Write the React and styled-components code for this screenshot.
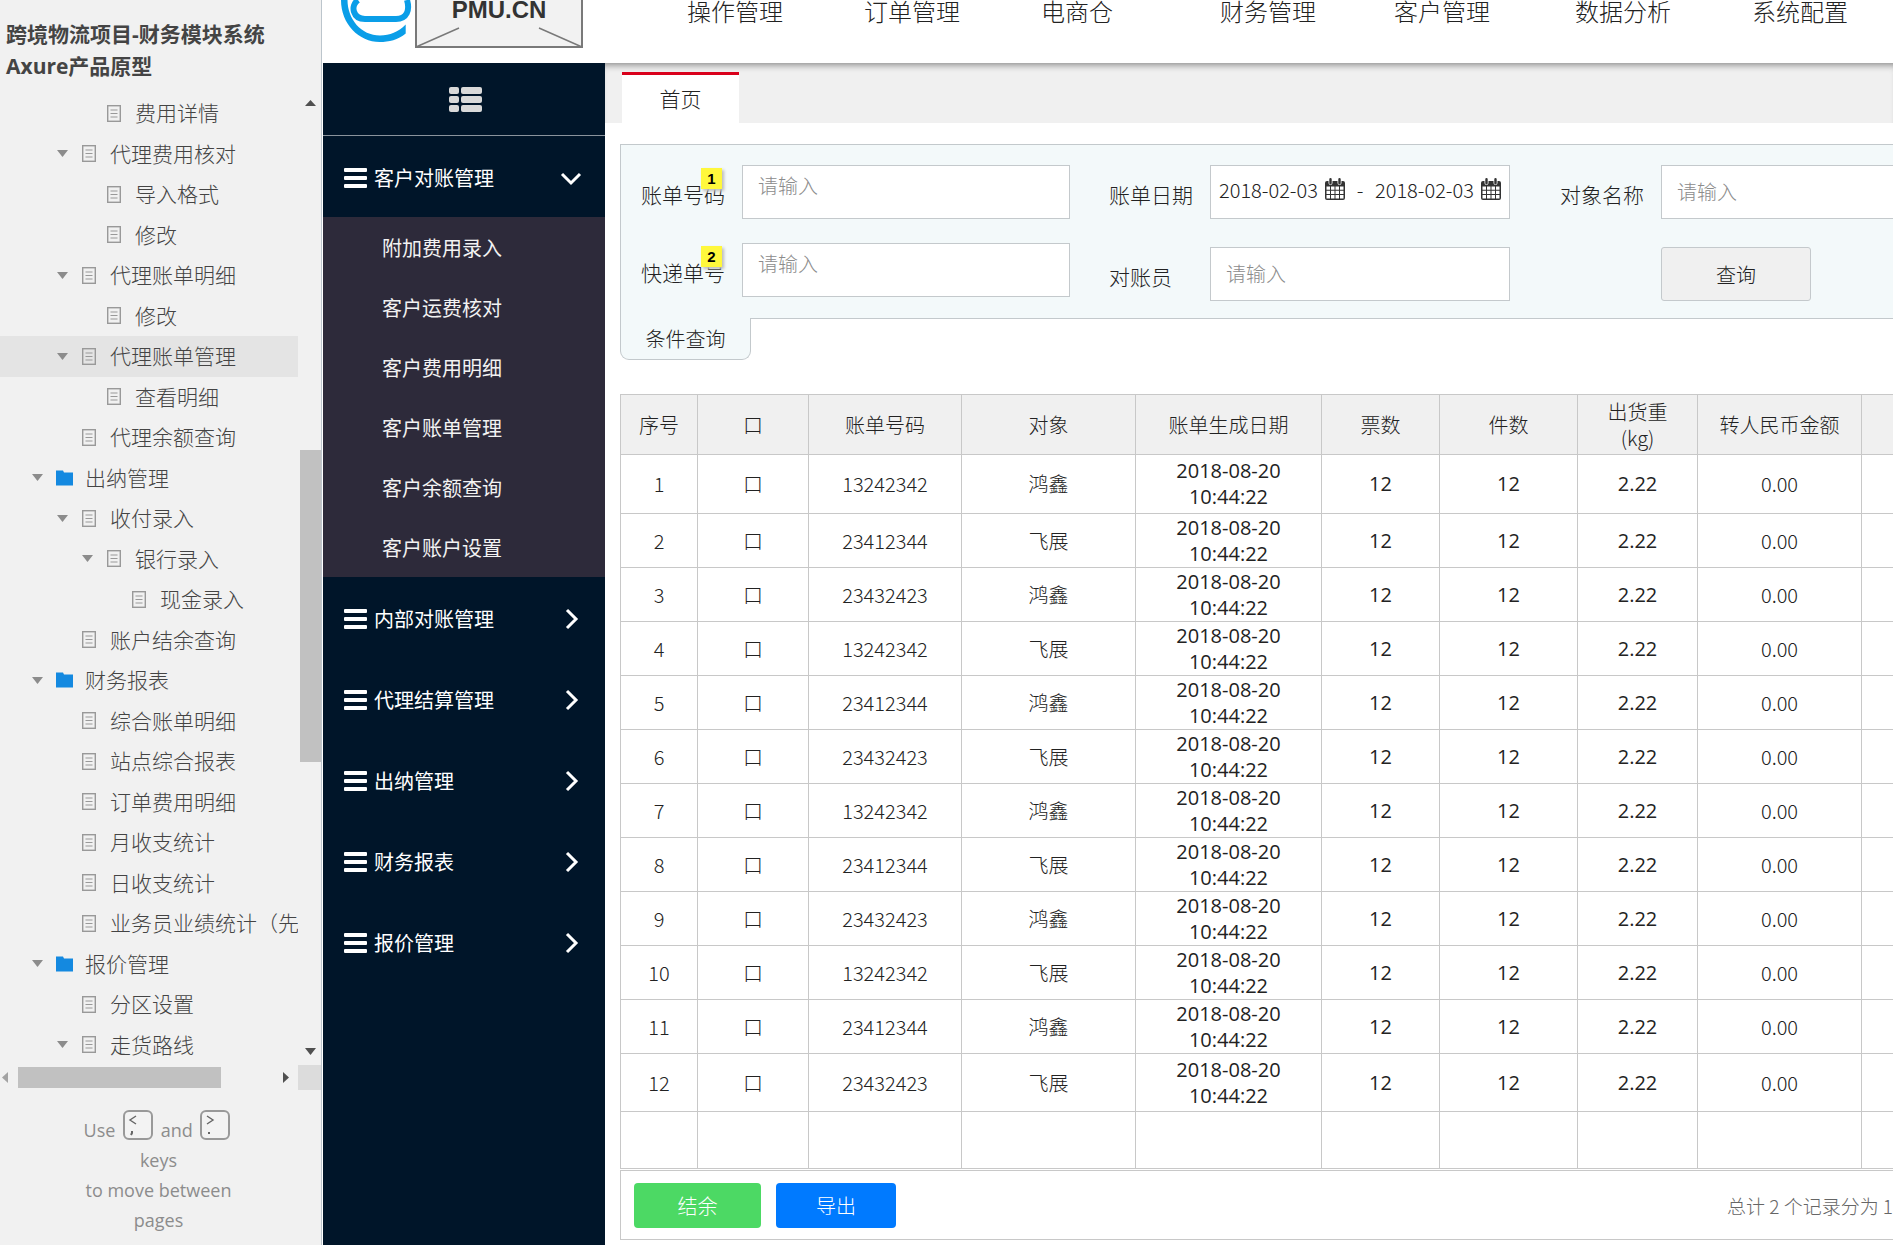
import React from 'react';
import styled, { createGlobalStyle } from 'styled-components';

const GlobalStyle = createGlobalStyle`
  * {
    box-sizing: border-box;
  }

  body {
    margin: 0;
    overflow: hidden;
    background-color: #fff;
    color: #222;
    font-family: "Noto Sans CJK SC", sans-serif;
    font-size: 20px;
    font-weight: 300;
  }

  ul {
    margin: 0;
    padding: 0;
    list-style: none;
  }

  a {
    color: inherit;
    text-decoration: none;
  }

  button, input {
    font: inherit;
    color: inherit;
  }
`;

const Page = styled.div`
  display: flex;
  min-height: 100vh;
  overflow: hidden;
`;

/* ---------- page tree ---------- */

const Sidebar = styled.aside`
  flex: none;
  width: 322px;
  margin-right: 1px;
  border-right: 1px solid #bcc5cc;
  background-color: #f1f1f1;
`;

const ProjectTitle = styled.h1`
  margin: 0;
  padding: 18px 6px 11px;
  color: #444;
  font-family: "Open Sans", "Noto Sans CJK SC", sans-serif;
  font-size: 21px;
  font-weight: bold;
  line-height: 32px;
`;

const TreeArea = styled.div`
  display: grid;
  grid-template-columns: 1fr 23px;
  grid-template-rows: 972px 25px;
`;

const Tree = styled.ul`
  display: grid;
  grid-auto-rows: 1fr;
  overflow: hidden;
`;

const TreeItem = styled.li`
  display: flex;
  align-items: center;
  padding-left: ${({ $level }) => 32 + $level * 25}px;
  background-color: ${({ $active }) => ($active ? '#e4e4e4' : 'transparent')};
  color: #444;
  font-size: 21px;
  line-height: 30px;
  white-space: nowrap;
`;

const TreeLink = styled.a`
  padding-bottom: 2px;
`;

const ArrowSlot = styled.span`
  display: flex;
  flex: none;
  width: 23px;
`;

const IconSlot = styled.span`
  display: flex;
  flex: none;
  justify-content: center;
  width: 18px;
  margin-right: 12px;
`;

const VerticalBar = styled.div`
  display: flex;
  flex-direction: column;
  align-items: center;
  justify-content: space-between;
  padding: 7px 0 10px 2px;
`;

const VerticalThumb = styled.div`
  width: 21px;
  height: 312px;
  margin-top: 56px;
  background-color: #c1c1c1;
`;

const HorizontalBar = styled.div`
  display: flex;
  align-items: center;
  padding: 0 9px 0 2px;
`;

const HorizontalThumb = styled.div`
  width: 203px;
  height: 21px;
  margin: 0 auto 0 10px;
  background-color: #c1c1c1;
`;

const Corner = styled.div`
  background-color: #dcdcdc;
`;

const Help = styled.p`
  margin: 0;
  padding: 20px 70px 0 66px;
  color: #8c8c8c;
  font-family: "Open Sans", sans-serif;
  font-size: 18px;
  font-weight: 400;
  line-height: 30px;
  text-align: center;

  svg {
    margin: 0 3px;
    vertical-align: -3px;
  }
`;

/* ---------- top header ---------- */

const Main = styled.div`
  display: flex;
  flex: 1;
  flex-direction: column;
  min-width: 0;
`;

const Header = styled.header`
  display: flex;
  align-items: flex-start;
  height: 63px;
  background-color: #fff;
`;

const Brand = styled.div`
  display: flex;
  flex: none;
  width: 364px;
  padding-left: 18px;
`;

const Placeholder = styled.div`
  position: relative;
  height: 48px;
  margin-left: 2px;

  svg {
    display: block;
  }
`;

const PlaceholderText = styled.strong`
  position: absolute;
  top: 0;
  left: 0;
  width: 100%;
  color: #333;
  font-family: "Liberation Sans", sans-serif;
  font-size: 24px;
  font-weight: bold;
  line-height: 20px;
  text-align: center;
`;

const Nav = styled.nav`
  display: grid;
  grid-template-columns: 177px 177px 179px 174px 181px 177px auto;
  font-size: 24px;
  line-height: 22px;
  white-space: nowrap;
`;

const Body = styled.div`
  display: flex;
  flex: 1;
`;

/* ---------- dark menu ---------- */

const Menu = styled.nav`
  flex: none;
  width: 282px;
  background-color: #001529;
  color: #fff;
  font-weight: 400;
`;

const MenuToggle = styled.button`
  display: flex;
  align-items: center;
  justify-content: center;
  width: 100%;
  height: 73px;
  padding: 2px 0 0 3px;
  border: 0;
  border-bottom: 1px solid #8a939c;
  background: none;
`;

const MenuItem = styled.button`
  display: flex;
  align-items: center;
  width: 100%;
  height: 81px;
  padding: 2px 22px 0 21px;
  border: 0;
  background: none;
  text-align: left;
`;

const MenuText = styled.span`
  flex: 1;
  margin-left: 7px;
`;

const ChevronSlot = styled.span`
  display: flex;
  justify-content: center;
  width: 24px;
`;

const SubMenu = styled.ul`
  background-color: #2d2a3a;
`;

const SubMenuItem = styled.li`
  padding: 2px 0 0 59px;
  color: #f2f2f2;
  line-height: 58px;
`;

/* ---------- content ---------- */

const Content = styled.main`
  flex: 1;
  min-width: 0;
  overflow: hidden;
`;

const TabBar = styled.div`
  display: flex;
  align-items: flex-end;
  height: 60px;
  padding-left: 17px;
  background-color: #f0f0f0;
  box-shadow: inset 0 7px 7px -5px #888;
`;

const Tab = styled.button`
  width: 117px;
  height: 51px;
  padding: 0 0 2px;
  border: 0;
  border-top: 3px solid #d9001b;
  background-color: #fff;
  font-size: 21px;
`;

const Section = styled.div`
  padding: 21px 0 0 15px;
`;

const SearchPanel = styled.form`
  display: flex;
  gap: 39px;
  padding: 20px 0 17px 20px;
  border: 1px solid #c3c9cc;
  border-right: 0;
  background-color: #f3f9fa;
`;

const FieldColumn = styled.div`
  display: flex;
  flex: none;
  flex-direction: column;
  gap: ${({ $gap }) => $gap}px;

  &:last-child {
    flex: 1;
    margin-left: 11px;
  }
`;

const Field = styled.div`
  display: flex;
  align-items: center;
`;

const Label = styled.label`
  position: relative;
  flex: none;
  width: 101px;
  padding-top: 3px;
  font-size: 21px;
  line-height: 30px;
`;

const Note = styled.span`
  position: absolute;
  top: -8px;
  left: 60px;
  width: 21px;
  height: 21px;
  background-color: #fff83c;
  box-shadow: 2px 2px 3px #bbb;
  color: #000;
  font-family: "Liberation Sans", sans-serif;
  font-size: 15px;
  font-weight: bold;
  line-height: 21px;
  text-align: center;
`;

const TextInput = styled.input`
  width: ${({ $width }) => $width};
  height: 54px;
  padding: 0 15px ${({ $raised }) => ($raised ? 14 : 2)}px;
  border: 1px solid #c4c9cc;
  border-radius: 0;
  background-color: #fff;

  &::placeholder {
    color: #8c8c8c;
    opacity: 1;
  }
`;

const DateRange = styled.div`
  display: flex;
  align-items: center;
  width: 300px;
  height: 54px;
  padding: 0 8px 6px 8px;
  border: 1px solid #c4c9cc;
  background-color: #fff;
`;

const DateInput = styled.input`
  width: 106px;
  padding: 0;
  border: 0;
  background: none;
`;

const Dash = styled.span`
  flex: 1;
  text-align: center;
`;

const SearchButton = styled.button`
  width: 150px;
  height: 54px;
  margin-left: 101px;
  border: 1px solid #c4c9cc;
  border-radius: 3px;
  background-color: #f0f0f0;
`;

const PanelTab = styled.button`
  display: block;
  width: 131px;
  height: 42px;
  margin-top: -1px;
  padding: 0;
  border: 1px solid #c3c9cc;
  border-top: 0;
  border-radius: 0 0 9px 9px;
  background-color: #f3f9fa;
`;

const Table = styled.table`
  width: 1361px;
  margin-top: 34px;
  border-collapse: collapse;
  table-layout: fixed;
  line-height: 26px;
  text-align: center;
`;

const Row = styled.tr`
  height: ${({ $height }) => $height}px;
`;

const HeadCell = styled.th`
  width: ${({ $width }) => $width}px;
  padding: 0 15px;
  border: 1px solid #c8c8c8;
  background-color: #f0f0f0;
  font-weight: 300;
`;

const Cell = styled.td`
  padding: 0;
  border: 1px solid #c8c8c8;
  font-family: ${({ $plain }) =>
    $plain ? '"Open Sans", sans-serif' : '"Noto Sans CJK SC", sans-serif'};
  font-weight: ${({ $plain }) => ($plain ? 400 : 300)};
`;

const TableFooter = styled.footer`
  display: flex;
  align-items: center;
  gap: 15px;
  height: 70px;
  margin-top: 1px;
  padding-left: 13px;
  border: 1px solid #c8c8c8;
  border-right: 0;
`;

const ActionButton = styled.button`
  width: ${({ $width }) => $width}px;
  height: 45px;
  padding: 0;
  border: 0;
  border-radius: 4px;
  background-color: ${({ $color }) => $color};
  color: #fff;
`;

const Total = styled.span`
  margin-left: auto;
  color: #666;
  font-size: 19px;
  white-space: nowrap;
`;

/* ---------- icons ---------- */

const Triangle = ({ direction = 'down', color = '#8c8c8c' }) => {
  const points = {
    down: '0,0 11,0 5.5,7',
    up: '0,6 11,6 5.5,0',
    left: '6,0 6,11 0,5.5',
    right: '0,0 0,11 6,5.5',
  };
  const flat = direction === 'down' || direction === 'up';
  return (
    <svg width={flat ? 11 : 6} height={flat ? 7 : 11} aria-hidden="true">
      <polygon points={points[direction]} fill={color} />
    </svg>
  );
};

const PageIcon = () => (
  <svg width="14" height="17" fill="none" stroke="#999" aria-hidden="true">
    <rect x="0.7" y="0.7" width="12.6" height="15.6" strokeWidth="1.4" />
    <path d="M3.5 5h7M3.5 8.5h7M3.5 12h7" strokeWidth="1.2" />
  </svg>
);

const FolderIcon = () => (
  <svg width="17" height="16" aria-hidden="true">
    <path d="M0 0.5h7l1 2h9V15.5H0z" fill="#1489e0" />
  </svg>
);

const KeyIcon = ({ top, bottom }) => (
  <svg width="30" height="30" aria-hidden="true">
    <rect x="1" y="1" width="28" height="28" rx="5" fill="#f3f3f3" stroke="#999" strokeWidth="2" />
    <path d={top} fill="none" stroke="#666" strokeWidth="1.4" />
    <path d={bottom} fill="none" stroke="#666" strokeWidth="2" />
  </svg>
);

const LogoIcon = () => (
  <svg width="72" height="44" aria-hidden="true">
    <path
      d="M0 0C0 24 18 42 38.7 42C48 42 57 40 64.7 33.5V24.5C57 32 49 35.5 39 35.5C20 35.5 6.5 19 6.5 0z"
      fill="#0a9ee8"
    />
    <path d="M17 0C9 6 12 19 24 19H55C66 19 69 10 66 0" fill="none" stroke="#0a9ee8" strokeWidth="6" />
  </svg>
);

const GridIcon = () => (
  <svg width="34" height="26" fill="#d9d9d9" aria-hidden="true">
    {[0, 9, 18].map(y => (
      <React.Fragment key={y}>
        <rect y={y} width="10" height="7" rx="2" />
        <rect x="12" y={y} width="21" height="7" rx="2" />
      </React.Fragment>
    ))}
  </svg>
);

const BarsIcon = () => (
  <svg width="23" height="20" fill="#fff" aria-hidden="true">
    <rect y="0" width="23" height="4" rx="1" />
    <rect y="8" width="23" height="4" rx="1" />
    <rect y="16" width="23" height="4" rx="1" />
  </svg>
);

const Chevron = ({ open }) => (
  <svg width="22" height="22" fill="none" stroke="#fff" strokeWidth="3" aria-hidden="true">
    <path d={open ? 'M2 7l9 9 9-9' : 'M7 2l9 9-9 9'} />
  </svg>
);

const CalendarIcon = () => (
  <svg width="20" height="22" viewBox="0 0 20 22" aria-hidden="true">
    <path d="M0 5a2 2 0 0 1 2-2h16a2 2 0 0 1 2 2v15a2 2 0 0 1-2 2H2a2 2 0 0 1-2-2z" fill="#333" />
    <path
      d="M1.5 8.5h3.5v3.3H1.5zM6 8.5h3.5v3.3H6zM10.5 8.5H14v3.3h-3.5zM15 8.5h3.5v3.3H15zM1.5 12.8h3.5v3.3H1.5zM6 12.8h3.5v3.3H6zM10.5 12.8H14v3.3h-3.5zM15 12.8h3.5v3.3H15zM1.5 17.1h3.5v3.4H1.5zM6 17.1h3.5v3.4H6zM10.5 17.1H14v3.4h-3.5zM15 17.1h3.5v3.4H15z"
      fill="#fff"
    />
    <path d="M5.5 1v4M14.5 1v4" stroke="#fff" strokeWidth="4" strokeLinecap="round" />
    <path d="M5.5 1.2v4M14.5 1.2v4" stroke="#333" strokeWidth="2.4" strokeLinecap="round" />
  </svg>
);

/* ---------- data ---------- */

const treeItems = [
  { text: '费用详情', level: 2 },
  { text: '代理费用核对', level: 1, open: true },
  { text: '导入格式', level: 2 },
  { text: '修改', level: 2 },
  { text: '代理账单明细', level: 1, open: true },
  { text: '修改', level: 2 },
  { text: '代理账单管理', level: 1, open: true, active: true },
  { text: '查看明细', level: 2 },
  { text: '代理余额查询', level: 1 },
  { text: '出纳管理', level: 0, open: true },
  { text: '收付录入', level: 1, open: true },
  { text: '银行录入', level: 2, open: true },
  { text: '现金录入', level: 3 },
  { text: '账户结余查询', level: 1 },
  { text: '财务报表', level: 0, open: true },
  { text: '综合账单明细', level: 1 },
  { text: '站点综合报表', level: 1 },
  { text: '订单费用明细', level: 1 },
  { text: '月收支统计', level: 1 },
  { text: '日收支统计', level: 1 },
  { text: '业务员业绩统计（先', level: 1 },
  { text: '报价管理', level: 0, open: true },
  { text: '分区设置', level: 1 },
  { text: '走货路线', level: 1, open: true },
];

const navItems = ['操作管理', '订单管理', '电商仓', '财务管理', '客户管理', '数据分析', '系统配置'];

const subMenuItems = [
  '附加费用录入',
  '客户运费核对',
  '客户费用明细',
  '客户账单管理',
  '客户余额查询',
  '客户账户设置',
];

const menuItems = ['内部对账管理', '代理结算管理', '出纳管理', '财务报表', '报价管理'];

const columns = [
  { title: '序号', width: 77 },
  { title: '口', width: 111 },
  { title: '账单号码', width: 153 },
  { title: '对象', width: 174 },
  { title: '账单生成日期', width: 186 },
  { title: '票数', width: 118 },
  { title: '件数', width: 138 },
  { title: '出货重(kg)', width: 120 },
  { title: '转人民币金额', width: 164 },
  { title: '', width: 120 },
];

const codes = ['13242342', '23412344', '23432423'];
const partners = ['鸿鑫', '飞展'];

const rows = Array.from({ length: 12 }, (_, i) => ({
  id: i + 1,
  code: codes[i % 3],
  partner: partners[i % 2],
}));

const rowHeight = id => {
  if (id === 1) return 59;
  if (id === 12) return 58;
  return 54;
};

/* ---------- parts ---------- */

const PageTree = () => (
  <Sidebar>
    <ProjectTitle>
      跨境物流项目-财务模块系统
      <br />
      Axure产品原型
    </ProjectTitle>
    <TreeArea>
      <Tree>
        {treeItems.map(({ text, level, open, active }, i) => (
          <TreeItem key={i} $level={level} $active={active}>
            <ArrowSlot>{open && <Triangle />}</ArrowSlot>
            <IconSlot>{level === 0 ? <FolderIcon /> : <PageIcon />}</IconSlot>
            <TreeLink href="#page">{text}</TreeLink>
          </TreeItem>
        ))}
      </Tree>
      <VerticalBar>
        <Triangle direction="up" color="#505050" />
        <VerticalThumb />
        <Triangle color="#505050" />
      </VerticalBar>
      <HorizontalBar>
        <Triangle direction="left" color="#a3a3a3" />
        <HorizontalThumb />
        <Triangle direction="right" color="#505050" />
      </HorizontalBar>
      <Corner />
    </TreeArea>
    <Help>
      Use <KeyIcon top="M13 6l-6 4 6 4" bottom="M9 21v2l-1 2" /> and{' '}
      <KeyIcon top="M7 6l6 4-6 4" bottom="M8 23h2" /> keys
      <br />
      to move between pages
    </Help>
  </Sidebar>
);

const TopHeader = () => (
  <Header>
    <Brand>
      <LogoIcon />
      <Placeholder>
        <svg width="168" height="48" aria-hidden="true">
          <path d="M1 0V47H167V0" fill="#f2f2f2" stroke="#797979" strokeWidth="2" />
          <path d="M1 47L44 28M167 47L124 28" stroke="#797979" strokeWidth="1.4" />
        </svg>
        <PlaceholderText>PMU.CN</PlaceholderText>
      </Placeholder>
    </Brand>
    <Nav>
      {navItems.map(item => (
        <a key={item} href="#nav">{item}</a>
      ))}
    </Nav>
  </Header>
);

const SideMenu = () => (
  <Menu>
    <MenuToggle aria-label="菜单">
      <GridIcon />
    </MenuToggle>
    <MenuItem>
      <BarsIcon />
      <MenuText>客户对账管理</MenuText>
      <ChevronSlot><Chevron open /></ChevronSlot>
    </MenuItem>
    <SubMenu>
      {subMenuItems.map(item => (
        <SubMenuItem key={item}>
          <a href="#menu">{item}</a>
        </SubMenuItem>
      ))}
    </SubMenu>
    {menuItems.map(item => (
      <MenuItem key={item}>
        <BarsIcon />
        <MenuText>{item}</MenuText>
        <ChevronSlot><Chevron /></ChevronSlot>
      </MenuItem>
    ))}
  </Menu>
);

const Search = () => (
  <>
    <SearchPanel>
      <FieldColumn $gap={24}>
        <Field>
          <Label htmlFor="bill">账单号码<Note>1</Note></Label>
          <TextInput id="bill" placeholder="请输入" $width="328px" $raised />
        </Field>
        <Field>
          <Label htmlFor="express">快递单号<Note>2</Note></Label>
          <TextInput id="express" placeholder="请输入" $width="328px" $raised />
        </Field>
      </FieldColumn>
      <FieldColumn $gap={28}>
        <Field>
          <Label htmlFor="from">账单日期</Label>
          <DateRange>
            <DateInput id="from" defaultValue="2018-02-03" />
            <CalendarIcon />
            <Dash>-</Dash>
            <DateInput aria-label="账单日期" defaultValue="2018-02-03" />
            <CalendarIcon />
          </DateRange>
        </Field>
        <Field>
          <Label htmlFor="checker">对账员</Label>
          <TextInput id="checker" placeholder="请输入" $width="300px" />
        </Field>
      </FieldColumn>
      <FieldColumn $gap={28}>
        <Field>
          <Label htmlFor="target">对象名称</Label>
          <TextInput id="target" placeholder="请输入" $width="328px" />
        </Field>
        <SearchButton type="button">查询</SearchButton>
      </FieldColumn>
    </SearchPanel>
    <PanelTab>条件查询</PanelTab>
  </>
);

const BillTable = () => (
  <Table>
    <thead>
      <Row $height={60}>
        {columns.map(({ title, width }, i) => (
          <HeadCell key={i} $width={width}>{title}</HeadCell>
        ))}
      </Row>
    </thead>
    <tbody>
      {rows.map(({ id, code, partner }) => (
        <Row key={id} $height={rowHeight(id)}>
          <Cell>{id}</Cell>
          <Cell>口</Cell>
          <Cell>{code}</Cell>
          <Cell>{partner}</Cell>
          <Cell $plain>2018-08-20<br />10:44:22</Cell>
          <Cell $plain>12</Cell>
          <Cell $plain>12</Cell>
          <Cell $plain>2.22</Cell>
          <Cell>0.00</Cell>
          <Cell />
        </Row>
      ))}
      <Row $height={57}>
        {columns.map((_, i) => <Cell key={i} />)}
      </Row>
    </tbody>
  </Table>
);

const App = () => (
  <Page>
    <GlobalStyle />
    <PageTree />
    <Main>
      <TopHeader />
      <Body>
        <SideMenu />
        <Content>
          <TabBar>
            <Tab>首页</Tab>
          </TabBar>
          <Section>
            <Search />
            <BillTable />
            <TableFooter>
              <ActionButton $width={127} $color="#4cd964">结余</ActionButton>
              <ActionButton $width={120} $color="#007aff">导出</ActionButton>
              <Total>总计 2 个记录分为 1</Total>
            </TableFooter>
          </Section>
        </Content>
      </Body>
    </Main>
  </Page>
);

export default App;
